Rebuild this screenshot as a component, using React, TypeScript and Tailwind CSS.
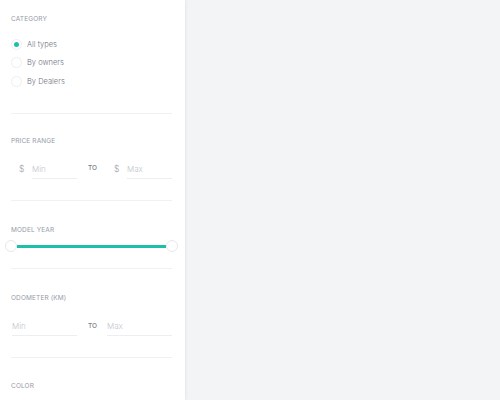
import React from "react";

const font = { fontFamily: "Inter, 'Noto Sans', sans-serif" };

function SectionLabel({ children }: { children: React.ReactNode }) {
  return (
    <div className="h-[10px] text-[6.5px] leading-[10px] tracking-[0.02em] uppercase text-[#959aa8]">
      {children}
    </div>
  );
}

function Radio({ label, checked }: { label: string; checked?: boolean }) {
  return (
    <label className="flex h-[18.5px] items-center gap-[5px]">
      <span className="flex h-[11px] w-[11px] items-center justify-center rounded-full border border-[#eceef2] bg-white">
        {checked && <span className="h-[5px] w-[5px] rounded-full bg-[#1cc0a6]" />}
      </span>
      <span className="text-[7.5px] font-light text-[#6f7280]">{label}</span>
    </label>
  );
}

function UnderlineInput({ placeholder, h = "h-[19px]" }: { placeholder: string; h?: string }) {
  return (
    <div className={`flex ${h} flex-1 items-center border-b border-[#eceef1] text-[8px] font-light text-[#c3c6cf]`}>
      {placeholder}
    </div>
  );
}

export default function App() {
  return (
    <div className="flex h-[400px] w-[500px] overflow-hidden bg-[#f3f4f6]" style={font}>
      <aside className="relative z-10 h-full w-[185px] shrink-0 bg-white pl-[11px] pr-[13px] shadow-[1px_0_3px_rgba(0,0,0,0.06)]">
        {/* Category */}
        <section className="border-b border-[#f0f1f4] pt-[14px] pb-[22px]">
          <SectionLabel>Category</SectionLabel>
          <div className="mt-[11px]">
            <Radio label="All types" checked />
            <Radio label="By owners" />
            <Radio label="By Dealers" />
          </div>
        </section>

        {/* Price range */}
        <section className="border-b border-[#f0f1f4] pt-[22px] pb-[21px]">
          <SectionLabel>Price range</SectionLabel>
          <div className="mt-[14px] flex items-center">
            <div className="flex w-[66px] items-center">
              <span className="w-[21px] pl-[8px] text-[8.5px] font-light text-[#9ea2ad]">$</span>
              <UnderlineInput placeholder="Min" />
            </div>
            <span className="w-[37px] pl-[11px] text-[6.5px] font-medium text-[#7a7e8a]">TO</span>
            <div className="flex flex-1 items-center">
              <span className="w-[13px] text-[8.5px] font-light text-[#9ea2ad]">$</span>
              <UnderlineInput placeholder="Max" />
            </div>
          </div>
        </section>

        {/* Model year */}
        <section className="border-b border-[#f0f1f4] pt-[24px] pb-[16px]">
          <SectionLabel>Model year</SectionLabel>
          <div className="relative mt-[5px] h-[12px]">
            <div className="absolute top-[5px] right-[6px] left-[6px] h-[3px] bg-[#1cc0a6]" />
            <div className="absolute top-0 left-[-6px] h-[12px] w-[12px] rounded-full border border-[#e6e8ec] bg-white" />
            <div className="absolute top-0 right-[-6px] h-[12px] w-[12px] rounded-full border border-[#e6e8ec] bg-white" />
          </div>
        </section>

        {/* Odometer */}
        <section className="border-b border-[#f0f1f4] pt-[24px] pb-[21px]">
          <SectionLabel>Odometer (km)</SectionLabel>
          <div className="mt-[15px] flex items-center">
            <div className="flex w-[66px] pl-[1px]">
              <UnderlineInput placeholder="Min" h="h-[18px]" />
            </div>
            <span className="w-[30px] pl-[11px] text-[6.5px] font-medium text-[#7a7e8a]">TO</span>
            <div className="flex flex-1">
              <UnderlineInput placeholder="Max" h="h-[18px]" />
            </div>
          </div>
        </section>

        {/* Color */}
        <section className="pt-[23px]">
          <SectionLabel>Color</SectionLabel>
        </section>
      </aside>
      <main className="flex-1" />
    </div>
  );
}
